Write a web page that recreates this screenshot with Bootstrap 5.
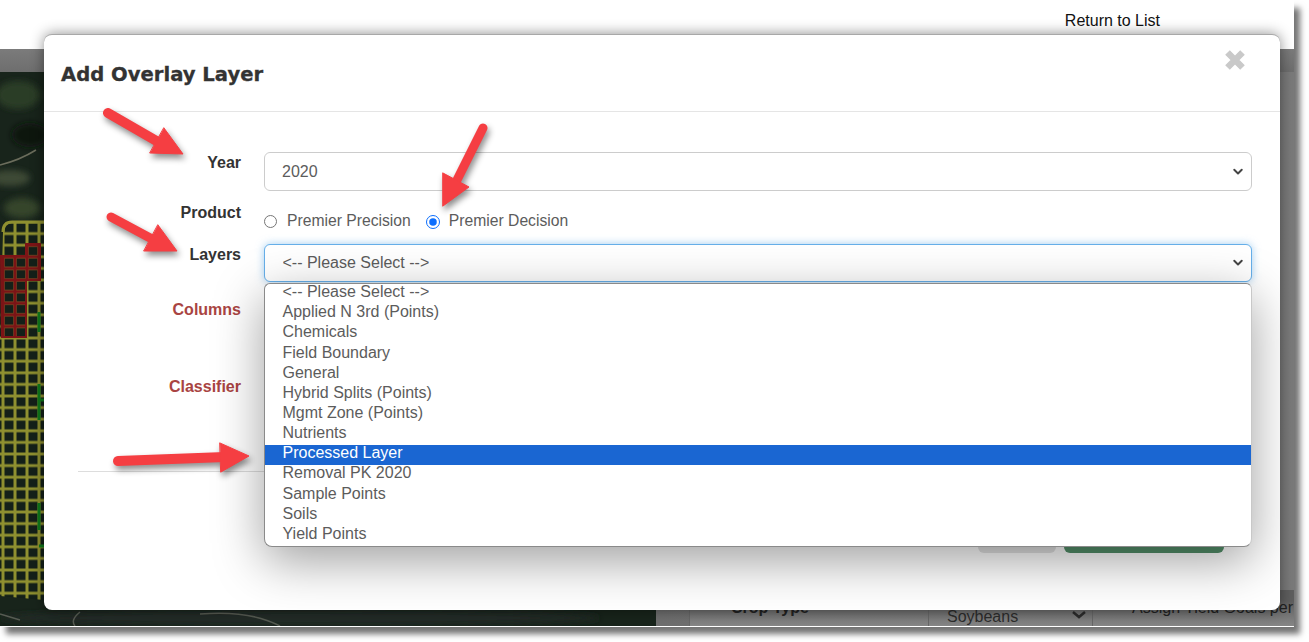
<!DOCTYPE html>
<html lang="en">
<head>
    <meta charset="UTF-8">
    <meta name="viewport" content="width=device-width, initial-scale=1.0">
    <title>Add Overlay Layer</title>
    <link href="https://cdn.jsdelivr.net/npm/bootstrap@5.3.0/dist/css/bootstrap.min.css" rel="stylesheet">
    <style>
        html, body { height: 642px; overflow: hidden; }
        body { background: #fff; font-family: "Liberation Sans", Arial, sans-serif; font-size: 16px; color: #5c5c5c; }

        /* page behind the dialog */
        .shot { position: relative; width: 1294px; height: 626px; overflow: hidden; background: #777; box-shadow: 0 1px 0 #fff, 6px 8px 6px rgba(0,0,0,.55); }
        .top-strip { height: 49px; background: #fff; color: #111; padding: 9px 134px 0 0; text-align: right; line-height: 24px; }
        .grey-strip { height: 23px; background: linear-gradient(#7b7b7b, #6e6e6e); }
        .under-area { height: 554px; }
        .map-pane { width: 656px; background: #15201a; overflow: hidden; }
        .rest-pane { background: linear-gradient(90deg, #6e6e6e, #7a7a7a); }
        .back-row { height: 36px; margin-left: 33px; color: #222; background: linear-gradient(#5e5e5e 30%, #868686); }
        .back-cell { border-left: 1px solid #666; }
        .cell-crop { width: 239px; padding: 6px 0 0 41px; font-weight: 700; }
        .cell-soy { width: 164px; padding: 15px 0 0 18px; color: #2c2c2c; }
        .cell-goal { padding: 6px 0 0 39px; }
        .soy-chev { margin: 6px 0 0 54px; }

        /* dialog */
        .dlg { position: absolute; left: 44px; top: 34px; z-index: 2; width: 1236px; height: 576px; overflow: hidden; background: #fff; border: 0; border-top: 1px solid #a8a8a8; border-radius: 8px; box-shadow: 0 0 14px rgba(0,0,0,.45); }
        .dlg-head { height: 77px; flex: none; padding: 0 0 0 17px; border-bottom: 1px solid #e5e5e5; }
        .dlg-title { font-family: "DejaVu Sans", Verdana, sans-serif; font-weight: 700; font-size: 19.6px; color: #333; margin: 0; padding-top: 28px; line-height: 24px; -webkit-text-stroke: .3px #333; }
        .dlg-close { background: none; border: 0; padding: 0; margin: 14px 34px 0 0; line-height: 0; }
        .dlg-form { padding: 40px 28px 0 0; }
        .fld-label { width: 197px; flex: none; text-align: right; font-weight: 700; color: #333; margin: -1px 23px 0 0; line-height: 24px; }
        .fld-label.bad { color: #a94442; }
        .fld-main { flex: 1; position: relative; }
        .form-select.fld-sel { height: 39px; padding: 0 36px 0 17px; color: #5c5c5c; font-size: 16px; border-color: #ccc; border-radius: 6px; background-position: right 5px center; background-image: url("data:image/svg+xml,%3csvg xmlns='http://www.w3.org/2000/svg' viewBox='0 0 16 16'%3e%3cpath fill='none' stroke='%23444' stroke-linecap='round' stroke-linejoin='round' stroke-width='2.6' d='m3 5 5 5 5-5'/%3e%3c/svg%3e"); }
        .form-select.fld-sel.on { height: 38px; padding-left: 17.5px; border-color: #66afe9; box-shadow: 0 0 8px rgba(102,175,233,.6); }
        .fld-bad { height: 37px; border-color: #a94442; border-radius: 6px; }
        .row-year { margin-bottom: 11px; }
        .row-prod { height: 30px; margin-bottom: 12px; }
        .row-layers { margin-bottom: 17px; }
        .row-cols { margin-bottom: 40px; }
        .radio-line { padding-top: 7px; line-height: 24px; }
        .radio-item { min-height: 0; padding: 0; margin: 0 15px 0 0; display: flex; align-items: center; }
        .radio-item .form-check-input { width: 13px; height: 13px; float: none; margin: 2px 10px 0 0; border-color: #767676; }
        .radio-item .form-check-input:checked { border-color: #0d6efd; background-color: #fff; background-image: url("data:image/svg+xml,%3csvg xmlns='http://www.w3.org/2000/svg' viewBox='-7 -7 14 14'%3e%3ccircle r='4.4' fill='%230d6efd'/%3e%3c/svg%3e"); }
        .radio-item + .radio-item .form-check-input { margin-right: 9px; width: 14px; height: 14px; }
        .radio-item .form-check-label { color: #5c5c5c; font-size: 15.7px; }

        .dlg-rule { margin: 58px 56px 0 34px; border: 0; border-top: 1px solid #ddd; opacity: 1; }
        .dlg-btns { padding: 43px 56px 0 0; }
        .btn-cancel { width: 78px; height: 38px; background: #e2e2e2; border: 0; }
        .btn-add { width: 160px; height: 38px; background: #54906a; border: 0; color: #fff; }

        /* open list of the Layers select */
        .layer-list { position: absolute; left: 0; right: 0; top: 39px; height: 264px; padding-top: .15px; z-index: 5; overflow: hidden; background: #fff; border: 1px solid #8a8a8a; border-right-color: #c8c8c8; border-radius: 6px 6px 8px 8px; box-shadow: 0 14px 50px rgba(0,0,0,.38); }
        .layer-list .list-group-item { border: 0; border-radius: 0; margin: 0; padding: 0 17.5px; height: 20.17px; line-height: 15px; color: #5c5c5c; background: transparent; }
        .layer-list .list-group-item.active { margin-top: 0; background: #1a66d2; color: #fff; }

        /* annotation arrows */
        .arrows { position: absolute; left: 0; top: 0; z-index: 10; filter: drop-shadow(2px 4px 3px rgba(0,0,0,.45)); pointer-events: none; }
    </style>
</head>
<body>
<div class="shot">
    <div class="top-strip">Return to List</div>
    <div class="grey-strip"></div>
    <div class="under-area d-flex">
        <div class="map-pane">
            <svg width="656" height="554" viewBox="0 72 656 554">
                <defs>
                    <pattern id="cells" x="-3" y="216.2" width="12" height="11.6" patternUnits="userSpaceOnUse">
                        <path d="M0 5.8H12M6 0V11.6" fill="none" stroke="#8f9030" stroke-width="3"/>
                    </pattern>
                    <pattern id="redcells" x="-3" y="216.2" width="12" height="11.6" patternUnits="userSpaceOnUse">
                        <path d="M0 5.8H12M6 0V11.6" fill="none" stroke="#7c1416" stroke-width="3"/>
                    </pattern>
                    <filter id="soft"><feGaussianBlur stdDeviation="3"/></filter>
                </defs>
                <rect y="72" width="656" height="554" fill="#18241b"/>
                <g filter="url(#soft)">
                    <ellipse cx="18" cy="95" rx="22" ry="14" fill="#2c3d26"/>
                    <ellipse cx="30" cy="135" rx="18" ry="12" fill="#0d1710"/>
                    <ellipse cx="10" cy="178" rx="20" ry="8" fill="#3d4a35"/>
                    <ellipse cx="22" cy="208" rx="18" ry="10" fill="#34452c"/>
                    <ellipse cx="300" cy="618" rx="300" ry="8" fill="#242c26"/>
                </g>
                <path d="M0 165Q20 160 36 150" fill="none" stroke="#6b6d5c" stroke-width="1.5"/>
                <path d="M3 232Q3 222 12 222H44V600L0 596V340Z" fill="#142019"/>
                <path d="M3 232Q3 222 12 222H44V600L0 596V340Z" fill="url(#cells)"/>
                <path d="M3 232Q3 222 12 222H44" fill="none" stroke="#8f9030" stroke-width="3"/>
                <path d="M39 312V332M39 384V420M39 503V530M39 400H44M39 546H44" fill="none" stroke="#0f7a1c" stroke-width="3"/>
                <path d="M1 256H26V244H40V280H26V337H2Z" fill="url(#redcells)" stroke="#7c1416" stroke-width="2"/>
                <path d="M80 612Q70 620 75 626M0 614L20 620M200 614Q250 610 280 626" fill="none" stroke="#565b52" stroke-width="1.5"/>
            </svg>
        </div>
        <div class="rest-pane flex-grow-1 d-flex flex-column">
            <div class="flex-grow-1"></div>
            <div class="back-row d-flex">
                <div class="back-cell cell-crop">Crop Type</div>
                <div class="back-cell cell-soy d-flex">Soybeans
                    <svg class="soy-chev" width="14" height="8" viewBox="0 0 14 8"><path d="M1 1l6 5 6-5" fill="none" stroke="#2c2c2c" stroke-width="2.5"/></svg>
                </div>
                <div class="back-cell cell-goal flex-grow-1 text-nowrap">Assign Yield Goals per</div>
            </div>
        </div>
    </div>

    <div class="modal-content dlg">
        <div class="dlg-head d-flex justify-content-between align-items-start">
            <h5 class="dlg-title">Add Overlay Layer</h5>
            <button type="button" class="dlg-close" aria-label="Close">
                <svg width="22" height="22" viewBox="0 0 22 22"><path d="M3.5 3.5L18.5 18.5M18.5 3.5L3.5 18.5" fill="none" stroke="#c9c9c9" stroke-width="6.5"/></svg>
            </button>
        </div>
        <div class="dlg-form">
            <div class="d-flex row-year">
                <label class="fld-label">Year</label>
                <div class="fld-main"><select class="form-select fld-sel"><option>2020</option></select></div>
            </div>
            <div class="d-flex row-prod">
                <label class="fld-label">Product</label>
                <div class="fld-main d-flex radio-line">
                    <div class="form-check radio-item">
                        <input class="form-check-input" type="radio" name="product" id="prodA">
                        <label class="form-check-label" for="prodA">Premier Precision</label>
                    </div>
                    <div class="form-check radio-item">
                        <input class="form-check-input" type="radio" name="product" id="prodB" checked>
                        <label class="form-check-label" for="prodB">Premier Decision</label>
                    </div>
                </div>
            </div>
            <div class="d-flex row-layers">
                <label class="fld-label">Layers</label>
                <div class="fld-main">
                    <select class="form-select fld-sel on"><option>&lt;-- Please Select --&gt;</option></select>
                    <div class="list-group layer-list">
                        <div class="list-group-item">&lt;-- Please Select --&gt;</div>
                        <div class="list-group-item">Applied N 3rd (Points)</div>
                        <div class="list-group-item">Chemicals</div>
                        <div class="list-group-item">Field Boundary</div>
                        <div class="list-group-item">General</div>
                        <div class="list-group-item">Hybrid Splits (Points)</div>
                        <div class="list-group-item">Mgmt Zone (Points)</div>
                        <div class="list-group-item">Nutrients</div>
                        <div class="list-group-item active">Processed Layer</div>
                        <div class="list-group-item">Removal PK 2020</div>
                        <div class="list-group-item">Sample Points</div>
                        <div class="list-group-item">Soils</div>
                        <div class="list-group-item">Yield Points</div>
                    </div>
                </div>
            </div>
            <div class="d-flex row-cols">
                <label class="fld-label bad">Columns</label>
                <div class="fld-main"><input class="form-control fld-bad"></div>
            </div>
            <div class="d-flex">
                <label class="fld-label bad">Classifier</label>
                <div class="fld-main"><input class="form-control fld-bad"></div>
            </div>
        </div>
        <hr class="dlg-rule">
        <div class="dlg-btns d-flex justify-content-end gap-2">
            <button type="button" class="btn btn-cancel">Cancel</button>
            <button type="button" class="btn btn-add">Add Layer</button>
        </div>
    </div>

    <svg class="arrows" width="1294" height="626" viewBox="0 0 1294 626">
        <g fill="#f53e42" stroke="#f53e42" stroke-linecap="round" stroke-linejoin="round">
            <path d="M108 113L160 143" stroke-width="10"/>
            <path d="M164 128L183 154L150 153Z" stroke-width="1"/>
            <path d="M483 128L456 182" stroke-width="9"/>
            <path d="M443 173L469 187L443 206Z" stroke-width="1"/>
            <path d="M111 217L152 239" stroke-width="9"/>
            <path d="M158 225L177 251L144 251Z" stroke-width="1"/>
            <path d="M118 461L225 457" stroke-width="10"/>
            <path d="M220 443L249 456L221 472Z" stroke-width="1"/>
        </g>
    </svg>
</div>
<script src="https://cdn.jsdelivr.net/npm/bootstrap@5.3.0/dist/js/bootstrap.bundle.min.js"></script>
</body>
</html>
